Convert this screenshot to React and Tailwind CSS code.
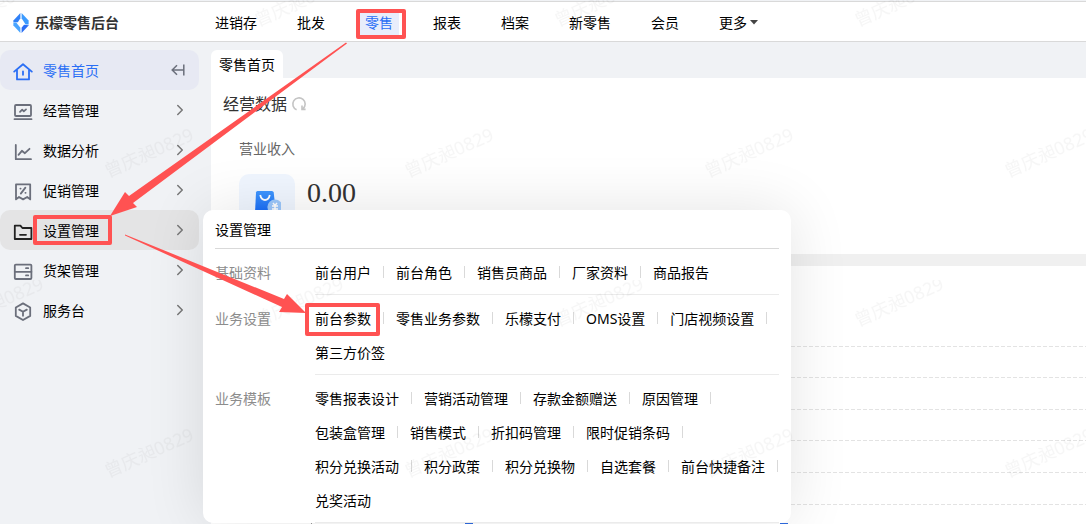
import React from 'react'
import { ChevronRight } from 'lucide-react'

const topMenu = ['进销存', '批发', '零售', '报表', '档案', '新零售', '会员'];

const menuGroups = [
    {
        label: '基础资料',
        items: ['前台用户', '前台角色', '销售员商品', '厂家资料', '商品报告'],
    },
    {
        label: '业务设置',
        items: ['前台参数', '零售业务参数', '乐檬支付', 'OMS设置', '门店视频设置', '第三方价签'],
    },
    {
        label: '业务模板',
        items: [
            '零售报表设计', '营销活动管理', '存款金额赠送', '原因管理',
            '包装盒管理', '销售模式', '折扣码管理', '限时促销条码',
            '积分兑换活动', '积分政策', '积分兑换物', '自选套餐', '前台快捷备注',
            '兑奖活动',
        ],
    },
];

const gridLines = [80, 111, 143, 174, 206, 238];

const Icon = ({ children }) => (
    <svg width="20" height="20" viewBox="0 0 20 20" fill="none" stroke="currentColor" strokeWidth="1.8" strokeLinecap="round" strokeLinejoin="round" aria-hidden="true" className="shrink-0">
        {children}
    </svg>
)

const sideMenu = [
    {
        label: '经营管理',
        icon: <Icon><rect x="2" y="4" width="16" height="11" rx="1" /><path d="M1.5 18.2h17M7 10.8l2.2-2.2 1.6 1.8L13 8.4" /></Icon>,
    },
    {
        label: '数据分析',
        icon: <Icon><path d="M2.8 4v14.2H18M5.5 13.8l3.4-4 3 2.4 4.6-4.4" /></Icon>,
    },
    {
        label: '促销管理',
        icon: <Icon><path d="M3 3.4h14.2v15l-3-2.4-4.1 2.4L6 16l-3 2.4zM12.4 6.6l-4.6 6M7.4 7.6h.2M12.4 11.8h.2" /></Icon>,
    },
    {
        label: '设置管理',
        icon: <Icon><path d="M1.8 18V4.6h5.6l2 2.4h9v11zM7 13.8h6" /></Icon>,
        open: true,
    },
    {
        label: '货架管理',
        icon: <Icon><rect x="1.8" y="3.6" width="16.6" height="14.4" rx="1" /><path d="M1.8 10.8h16.6M13 7.2h2.2M13 14.4h2.2" /></Icon>,
    },
    {
        label: '服务台',
        icon: <Icon><path d="M10 2.4l7.2 4.1v8.4L10 19l-7.2-4.1V6.5zM6.2 8.6l3.8 2.2 3.8-2.2M10 10.8v4" /></Icon>,
    },
];

const Header = () => (
    <header className="mt-px flex h-[41px] shrink-0 items-center border-y border-[#d9d9d9] bg-white pt-0.5">
        <div className="flex w-[209px] shrink-0 items-center gap-1.5 pl-[13px]">
            <svg width="16" height="20" viewBox="0 0 16 20" aria-hidden="true">
                <path d="M7.4 0v5.2L4.8 9.2H0.4V7.4z" fill="#2f80f7" />
                <path d="M8.6 0l7 7.4v4.2h-3L8.6 5.2z" fill="#3b9bff" />
                <path d="M0.4 9.6h2.8l4.2 5.2V20L0.4 12.6z" fill="#4aa5ff" />
                <path d="M15.6 12.2v.4L8.6 20v-5.2l2.4-3z" fill="#2a6ef5" />
            </svg>
            <span className="text-sm leading-5 font-bold text-[#333]">乐檬零售后台</span>
        </div>
        <nav className="flex items-center gap-7">
            {topMenu.map((name) => (
                <a
                    key={name}
                    href="#"
                    className={name === '零售' ? 'bg-[#e8edfb] px-1.5 leading-7 text-[#2a6ef5]' : 'px-1.5 leading-7'}
                >
                    {name}
                </a>
            ))}
            <button type="button" className="flex items-center gap-[3px] px-1.5 leading-7">
                更多
                <svg width="8" height="5" viewBox="0 0 8 5" fill="#444" aria-hidden="true"><path d="M0 0h8L4 4.5z" /></svg>
            </button>
        </nav>
    </header>
)

const Sidebar = () => (
    <aside className="w-[199px] shrink-0 text-[#6b6f7b]">
        <div className="flex h-10 items-center justify-between rounded-[10px] bg-[#e7e9f3] pr-3.5 pl-[13px]">
            <a href="#" className="flex items-center gap-2.5 pt-0.5 text-[#2a6ef5]">
                <Icon><path d="M1.2 10.6L10 3.2l8.8 7.4M4 9v9.4h12V9M10 10.4v3.4" /></Icon>
                零售首页
            </a>
            <button type="button" aria-label="收起菜单">
                <svg width="14" height="14" viewBox="0 0 14 14" fill="none" stroke="currentColor" strokeWidth="1.5" aria-hidden="true">
                    <path d="M12.8 1.5v11M12.5 7H1.5M6 2.2L1.2 7 6 11.8" />
                </svg>
            </button>
        </div>
        <ul>
            {sideMenu.map((item) => (
                <li key={item.label}>
                    <button
                        type="button"
                        className={item.open
                            ? 'flex h-10 w-full items-center justify-between rounded-[10px] bg-[#e4e4e5] pr-2.5 pl-[13px] text-[#222]'
                            : 'flex h-10 w-full items-center justify-between pr-2.5 pl-[13px]'}
                    >
                        <span className="flex items-center gap-2.5 pt-0.5">
                            {item.icon}
                            <span className="text-black">{item.label}</span>
                        </span>
                        <ChevronRight size={18} strokeWidth={2} className="text-[#777]" />
                    </button>
                </li>
            ))}
        </ul>
    </aside>
)

const Dashboard = () => (
    <main className="flex min-w-0 flex-1 flex-col">
        <div className="flex">
            <a href="#" className="rounded-t-md bg-white px-2 pt-0.5 leading-[26px]">零售首页</a>
        </div>
        <section className="bg-white px-3 pt-3.5 pb-6">
            <div className="flex items-center gap-1">
                <h2 className="text-base leading-6 text-[#333]">经营数据</h2>
                <button type="button" aria-label="刷新">
                    <svg width="16" height="16" viewBox="0 0 16 16" fill="none" stroke="#c4c4c4" strokeWidth="1.6" aria-hidden="true">
                        <path d="M5.6 13.8A6.2 6.2 0 1 1 12 12.8M11 9.6v3.8h3.6" />
                    </svg>
                </button>
            </div>
            <div className="px-4">
                <p className="mt-[23px] text-[#666]">营业收入</p>
                <div className="mt-[15px] flex gap-3">
                    <div className="flex size-14 items-center justify-center rounded-[10px] bg-[#f0f6ff]">
                        <svg width="28" height="28" viewBox="0 0 28 28" aria-hidden="true">
                            <defs>
                                <linearGradient id="bag" x1="0" y1="0" x2="0" y2="1">
                                    <stop offset="0" stopColor="#3f97ff" />
                                    <stop offset="1" stopColor="#1668f5" />
                                </linearGradient>
                            </defs>
                            <path d="M4.5 3h14.4q1.6 0 1.8 1.6L23 25H2L3 4.6Q3.1 3 4.5 3z" fill="url(#bag)" />
                            <path d="M7.2 7q1.2 5 4.8 5t4.8-5" fill="none" stroke="#fff" strokeWidth="1.8" />
                            <circle cx="22" cy="19" r="7.6" fill="#9cc8fb" />
                            <path d="M20 15l2 2.4 2-2.4M19 18h6M19 21h6M22 17.4V24" fill="none" stroke="#fff" strokeWidth="1.5" />
                        </svg>
                    </div>
                    <span className="font-['Liberation_Serif',serif] text-[28px] leading-[38px] text-[#333]">0.00</span>
                </div>
            </div>
        </section>
        <section className="mt-3 flex-1 bg-white shadow-[0_-12px_0_#f0f0f0]">
            <svg width="100%" height="300" aria-hidden="true">
                {gridLines.map((y) => (
                    <line key={y} x1="100" x2="100%" y1={y + 0.5} y2={y + 0.5} stroke="#e3e3e3" strokeDasharray="4 2" />
                ))}
                <rect x="254" y="257" width="8" height="43" fill="#2f6be0" />
                <rect x="569" y="257" width="8" height="43" fill="#2f6be0" />
                <rect x="100" y="257" width="1" height="43" fill="#999" />
            </svg>
        </section>
    </main>
)

const SettingsMenu = () => (
    <div className="absolute top-[210px] left-[203px] w-[588px] rounded-[10px] bg-white px-3 shadow-[0_0_60px_rgba(0,0,0,0.11)]">
        <h3 className="border-b border-[#d9d9d9] pt-2.5 pb-2">设置管理</h3>
        {menuGroups.map((group) => (
            <div key={group.label} className="flex pt-[7px]">
                <h4 className="w-[100px] shrink-0 leading-[34px] text-[#8c8c8c]">{group.label}</h4>
                <div className="flex-1 border-b border-[#ebebeb] pb-1 group-last:border-0">
                    <ul className="-mr-3 flex flex-wrap">
                        {group.items.map((name, i) => (
                            <li key={name} className="flex items-center leading-[34px] whitespace-nowrap">
                                <a href="#">{name}</a>
                                {i < group.items.length - 1 && <span className="mx-3 mb-0.5 h-3 w-px bg-[#d9d9d9]" />}
                            </li>
                        ))}
                    </ul>
                </div>
            </div>
        ))}
    </div>
)

// user name repeated over the whole page
const Watermark = () => (
    <svg className="pointer-events-none absolute inset-0 h-full w-full" aria-hidden="true">
        <defs>
            <pattern id="mark" x="250" y="-20" width="300" height="300" patternUnits="userSpaceOnUse">
                <g fontSize="18" fill="#000" fillOpacity="0.035">
                    <text transform="translate(8 47) rotate(-24)">曾庆昶0829</text>
                    <text transform="translate(158 198) rotate(-24)">曾庆昶0829</text>
                </g>
            </pattern>
        </defs>
        <rect width="100%" height="100%" fill="url(#mark)" />
    </svg>
)

// red boxes and arrows: 零售 -> 设置管理 -> 前台参数
const Guide = () => (
    <svg className="pointer-events-none absolute inset-0 h-full w-full" aria-hidden="true">
        <g fill="none" stroke="#ff5252" strokeWidth="4" strokeLinejoin="round">
            <rect x="358" y="11" width="46" height="26" />
            <rect x="35" y="217" width="75" height="26" />
            <rect x="307" y="305" width="71" height="29" />
        </g>
        <g fill="#ff5252">
            <path d="M346 42.5L129 196L125 192L110 216L137 207L133 203L347 43.5z" />
            <path d="M125 234.5L284 299L287 294L306 313L279 312L282 307L125 235.5z" />
        </g>
    </svg>
)

export default function App() {
    return (
        <div className="relative flex h-screen flex-col overflow-hidden bg-[#f0f2f5] font-['Noto_Sans','Noto_Sans_CJK_SC',sans-serif] text-sm leading-5 text-black">
            <Header />
            <div className="flex min-h-0 flex-1 gap-3 pt-2">
                <Sidebar />
                <Dashboard />
            </div>
            <SettingsMenu />
            <Watermark />
            <Guide />
        </div>
    )
}
